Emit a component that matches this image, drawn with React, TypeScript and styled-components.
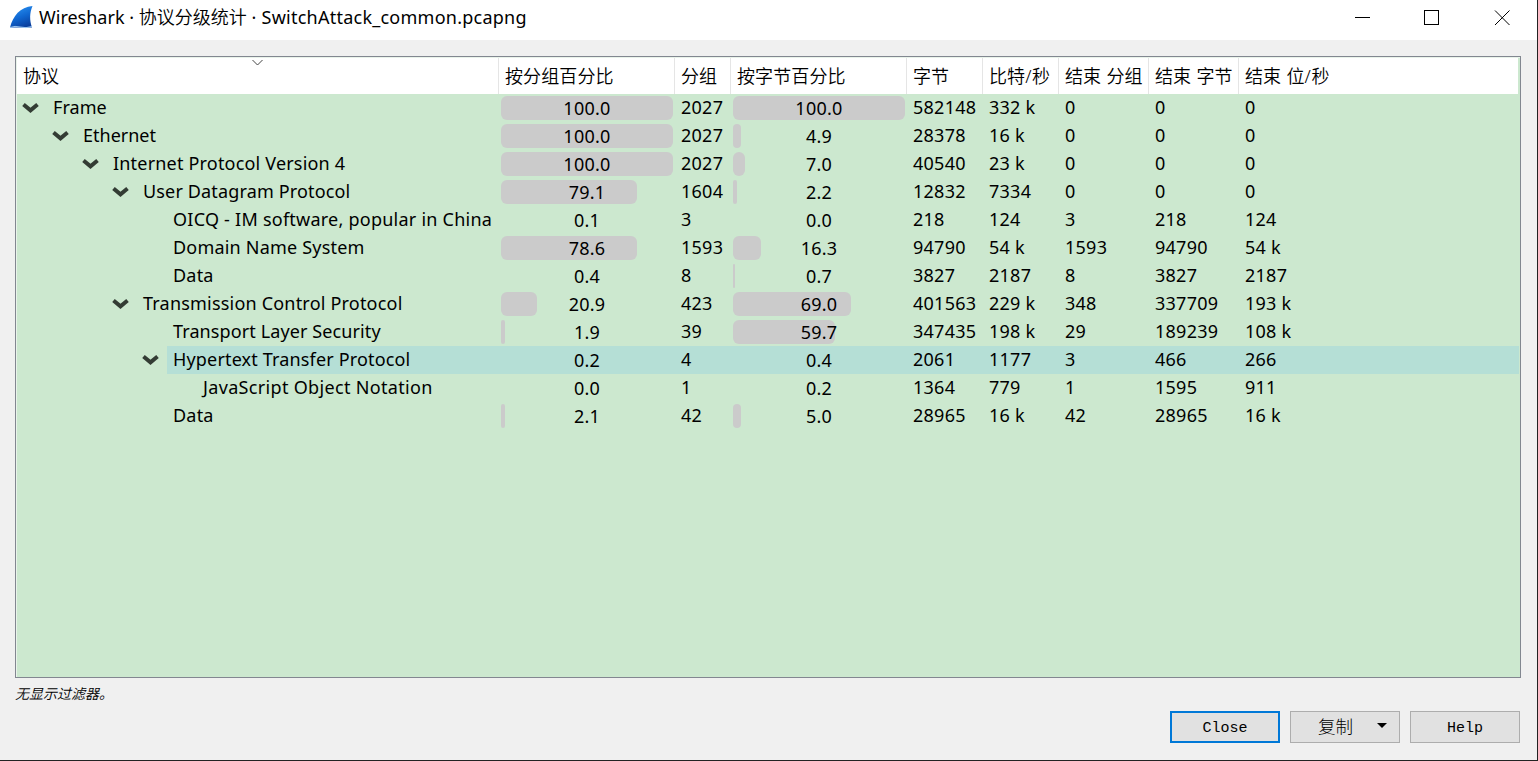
import React from 'react';
import styled, { createGlobalStyle } from 'styled-components';

const Global = createGlobalStyle`
  * { box-sizing: border-box; }
  body { margin: 0; font-family: "Noto Sans", "Noto Sans CJK SC", sans-serif; font-size: 18px; color: #000; }
`;

const Window = styled.div`
  width: 1538px;
  height: 761px;
  display: flex;
  flex-direction: column;
  background: #f0f0f0;
  border-right: 1px solid #222;
  border-bottom: 1px solid #222;
  overflow: hidden;
`;

const TitleBar = styled.header`
  height: 40px;
  flex: none;
  display: flex;
  align-items: flex-start;
  background: #fff;
  padding-left: 9px;
`;

const Logo = styled.svg`
  width: 24px;
  height: 24px;
  margin-top: 5px;
  flex: none;
`;

const Title = styled.h1`
  flex: 1;
  margin: 0 0 0 6px;
  font-size: 18px;
  font-weight: 400;
  line-height: 32px;
  white-space: pre;
`;

const FileName = styled.span`
  letter-spacing: 0.24px;
`;

const Hanzi = styled.span`
  font-family: "Noto Sans CJK SC", sans-serif;
  font-weight: 350;
`;

const WindowButtons = styled.div`
  display: flex;
`;

const WindowButton = styled.button`
  width: 70px;
  height: 36px;
  padding: 0;
  border: 0;
  background: none;
  display: flex;
  align-items: center;
  justify-content: center;
`;

const Tree = styled.section`
  height: 622px;
  margin: 16px 16px 0 15px;
  flex: none;
  border: 1px solid #828790;
  padding: 1px;
  background: #cce8cf;
  box-shadow: inset 1px 1px 0 #e9f3ea;
`;

const columns = '482px 176px 56px 176px 76px 76px 90px 90px 1fr';

const HeaderRow = styled.div`
  display: grid;
  grid-template-columns: ${columns};
  height: 36px;
  margin-right: 1px;
  background: #fff;
`;

const HeaderCell = styled.div<{ $last?: boolean }>`
  position: relative;
  padding-left: 6px;
  line-height: 34px;
  font-family: "Noto Sans CJK SC", sans-serif;
  font-weight: 350;
  letter-spacing: 0.1px;
  white-space: pre;
  border-right: ${p => (p.$last ? 0 : 1)}px solid #e5e5e5;
`;

const Separator = styled.span`
  font-family: "Noto Sans", sans-serif;
  letter-spacing: 0.6px;
`;

const SortMark = styled.svg`
  position: absolute;
  left: 235px;
  top: 1px;
`;

const Row = styled.div<{ $selectedFrom?: number }>`
  display: grid;
  grid-template-columns: ${columns};
  height: 28px;
  line-height: 28px;
  background: ${p =>
    p.$selectedFrom ? `linear-gradient(to right, transparent ${p.$selectedFrom}px, #b5dfd6 ${p.$selectedFrom}px)` : 'none'};
`;

const NameCell = styled.div<{ $depth: number }>`
  display: flex;
  align-items: flex-start;
  padding-left: ${p => p.$depth * 30}px;
  white-space: pre;
`;

const Expander = styled.span`
  width: 30px;
  height: 28px;
  flex: none;
  padding: 8px 0 0 4px;
  display: flex;
  align-items: flex-start;
`;

const Name = styled.span<{ $ls: number }>`
  padding-left: 6px;
  line-height: 27px;
  letter-spacing: ${p => p.$ls}px;
`;

const Cell = styled.div`
  padding-left: 6px;
  line-height: 27px;
  white-space: pre;
  letter-spacing: 0.25px;
`;

const BarCell = styled.div`
  display: grid;
  padding: 2px;
  > * { grid-area: 1 / 1; }
`;

const Bar = styled.span<{ $w: number }>`
  width: ${p => p.$w}px;
  height: 24px;
  border-radius: ${p => Math.min(6, p.$w / 2)}px;
  background: #cbcbcb;
`;

const BarLabel = styled.span`
  text-align: center;
  line-height: 25px;
  letter-spacing: 0.25px;
`;

const Hint = styled.p`
  margin: 6px 0 0 15px;
  height: 18px;
  line-height: 19px;
  font-size: 14px;
  font-weight: 350;
  font-style: italic;
  font-family: "Noto Sans CJK SC", sans-serif;
`;

const Footer = styled.footer`
  display: flex;
  justify-content: flex-end;
  gap: 10px;
  margin-top: 9px;
  padding-right: 17px;
`;

const Button = styled.button<{ $primary?: boolean }>`
  width: 110px;
  height: 32px;
  padding: 2px 0 0;
  border: ${p => (p.$primary ? '2px solid #0078d7' : '1px solid #adadad')};
  background: #e1e1e1;
  color: #000;
  display: flex;
  align-items: center;
  justify-content: center;
  font-family: "Liberation Mono", "Noto Sans CJK SC", monospace;
  font-size: 15px;
`;

const CopyLabel = styled.span`
  font-family: "Noto Sans CJK SC", sans-serif;
  font-size: 17.5px;
  font-weight: 300;
  line-height: 24px;
  margin: 0 24px 5px 15px;
`;

const MenuArrow = styled.svg`
  margin-bottom: 4px;
`;

type Item = {
  depth: number; open?: boolean; name: string; ls: number;
  pct: string; pctW: number; packets: string; bytePct: string; byteW: number; rest: string[]; selected?: boolean;
};

const items: Item[] = [
  { depth: 0, open: true, name: 'Frame', ls: 0.05, pct: '100.0', pctW: 172, packets: '2027', bytePct: '100.0', byteW: 172, rest: ['582148', '332 k', '0', '0', '0'] },
  { depth: 1, open: true, name: 'Ethernet', ls: 0, pct: '100.0', pctW: 172, packets: '2027', bytePct: '4.9', byteW: 8, rest: ['28378', '16 k', '0', '0', '0'] },
  { depth: 2, open: true, name: 'Internet Protocol Version 4', ls: 0.19, pct: '100.0', pctW: 172, packets: '2027', bytePct: '7.0', byteW: 12, rest: ['40540', '23 k', '0', '0', '0'] },
  { depth: 3, open: true, name: 'User Datagram Protocol', ls: 0.15, pct: '79.1', pctW: 136, packets: '1604', bytePct: '2.2', byteW: 4, rest: ['12832', '7334', '0', '0', '0'] },
  { depth: 4, name: 'OICQ - IM software, popular in China', ls: 0.24, pct: '0.1', pctW: 0, packets: '3', bytePct: '0.0', byteW: 0, rest: ['218', '124', '3', '218', '124'] },
  { depth: 4, name: 'Domain Name System', ls: 0.2, pct: '78.6', pctW: 136, packets: '1593', bytePct: '16.3', byteW: 28, rest: ['94790', '54 k', '1593', '94790', '54 k'] },
  { depth: 4, name: 'Data', ls: 0.2, pct: '0.4', pctW: 0, packets: '8', bytePct: '0.7', byteW: 2, rest: ['3827', '2187', '8', '3827', '2187'] },
  { depth: 3, open: true, name: 'Transmission Control Protocol', ls: 0.2, pct: '20.9', pctW: 36, packets: '423', bytePct: '69.0', byteW: 118, rest: ['401563', '229 k', '348', '337709', '193 k'] },
  { depth: 4, name: 'Transport Layer Security', ls: 0.11, pct: '1.9', pctW: 4, packets: '39', bytePct: '59.7', byteW: 102, rest: ['347435', '198 k', '29', '189239', '108 k'] },
  { depth: 4, open: true, name: 'Hypertext Transfer Protocol', ls: 0.16, pct: '0.2', pctW: 0, packets: '4', bytePct: '0.4', byteW: 0, rest: ['2061', '1177', '3', '466', '266'], selected: true },
  { depth: 5, name: 'JavaScript Object Notation', ls: 0.33, pct: '0.0', pctW: 0, packets: '1', bytePct: '0.2', byteW: 0, rest: ['1364', '779', '1', '1595', '911'] },
  { depth: 4, name: 'Data', ls: 0.2, pct: '2.1', pctW: 4, packets: '42', bytePct: '5.0', byteW: 8, rest: ['28965', '16 k', '42', '28965', '16 k'] },
];

const headers = ['协议', '按分组百分比', '分组', '按字节百分比', '字节', '比特/秒', '结束 分组', '结束 字节', '结束 位/秒'];

const Heading = ({ text }: { text: string }) => (
  <>
    {text.split(/([ /])/).map((part, i) => (i % 2 ? <Separator key={i}>{part}</Separator> : part))}
  </>
);

const Percent = ({ value, width }: { value: string; width: number }) => (
  <BarCell>
    <Bar $w={width} />
    <BarLabel>{value}</BarLabel>
  </BarCell>
);

export default function App() {
  return (
    <Window>
      <Global />
      <TitleBar>
        <Logo viewBox="0 0 24 24">
          <defs>
            <linearGradient id="fin" x1="0.2" y1="0" x2="0.6" y2="1">
              <stop offset="0" stopColor="#2b95f5" />
              <stop offset="0.55" stopColor="#0f66d0" />
              <stop offset="1" stopColor="#0a3f9e" />
            </linearGradient>
          </defs>
          <path d="M1 22.500C4 11 11 2 23.500 1C20.500 8 20.500 15 23 22.500Z" fill="url(#fin)" />
          <path d="M1 22.500Q6 20.500 11 22Q17 23.500 23 21.500" fill="none" stroke="#9cc8f2" strokeWidth="1" />
        </Logo>
        <Title>Wireshark · <Hanzi>协议分级统计</Hanzi><FileName> · SwitchAttack_common.pcapng</FileName></Title>
        <WindowButtons>
          <WindowButton aria-label="Minimize">
            <svg width="16" height="16" shapeRendering="crispEdges"><path d="M1 7.500H16" stroke="#000" /></svg>
          </WindowButton>
          <WindowButton aria-label="Maximize">
            <svg width="16" height="16" shapeRendering="crispEdges"><path d="M.5 .5H14.500V14.500H.5Z" fill="none" stroke="#000" /></svg>
          </WindowButton>
          <WindowButton aria-label="Close window">
            <svg width="16" height="16"><path d="M1 .5L15.500 15M15.500 .5L1 15" stroke="#000" /></svg>
          </WindowButton>
        </WindowButtons>
      </TitleBar>
      <Tree>
        <HeaderRow>
          {headers.map((h, i) => (
            <HeaderCell key={h} $last={i === headers.length - 1}>
              <Heading text={h} />
              {i === 0 && (
                <SortMark width="12" height="8"><path d="M.5 1L5.500 6L10.500 1" fill="none" stroke="#444" /></SortMark>
              )}
            </HeaderCell>
          ))}
        </HeaderRow>
        {items.map((it, i) => (
          <Row key={i} $selectedFrom={it.selected ? 150 : undefined}>
            <NameCell $depth={it.depth}>
              <Expander>
                {it.open && (
                  <svg width="20" height="13"><path d="M2.500 2.500L9.500 8.300L16.500 2.500" fill="none" stroke="#333c34" strokeWidth="4" /></svg>
                )}
              </Expander>
              <Name $ls={it.ls}>{it.name}</Name>
            </NameCell>
            <Percent value={it.pct} width={it.pctW} />
            <Cell>{it.packets}</Cell>
            <Percent value={it.bytePct} width={it.byteW} />
            {it.rest.map((v, j) => <Cell key={j}>{v}</Cell>)}
          </Row>
        ))}
      </Tree>
      <Hint>无显示过滤器。</Hint>
      <Footer>
        <Button $primary>Close</Button>
        <Button>
          <CopyLabel>复制</CopyLabel>
          <MenuArrow width="10" height="6"><path d="M0 0H10L5 5Z" fill="#000" /></MenuArrow>
        </Button>
        <Button>Help</Button>
      </Footer>
    </Window>
  );
}
